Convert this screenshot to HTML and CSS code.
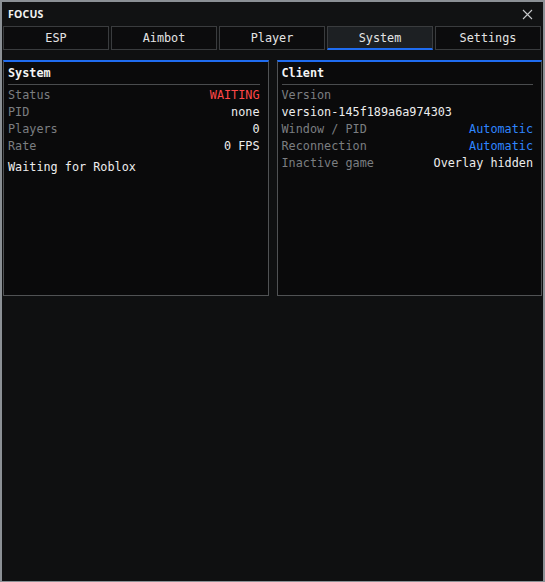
FILE: index.html
```html
<!DOCTYPE html>
<html lang="en">
<head>
  <meta charset="UTF-8">
  <meta name="viewport" content="width=device-width, initial-scale=1.0">
  <title>FOCUS</title>
  <link rel="stylesheet" href="styles.css">
</head>
<body>

  <div class="window">
    <!-- Title bar -->
    <div class="titlebar">
      <span class="title">FOCUS</span>
      <svg class="close" width="11" height="11" viewBox="0 0 11 11">
        <path d="M1 1 L10 10 M10 1 L1 10" stroke="#c8cacc" stroke-width="1.1" fill="none"/>
      </svg>
    </div>

    <!-- Tabs -->
    <div class="tabs">
      <div class="tab">ESP</div>
      <div class="tab">Aimbot</div>
      <div class="tab">Player</div>
      <div class="tab active">System</div>
      <div class="tab">Settings</div>
    </div>

    <div class="panels">
      <div class="panel">
        <div class="panel-head">System</div>
        <div class="row"><span class="label">Status</span><span class="value red">WAITING</span></div>
        <div class="row"><span class="label">PID</span><span class="value">none</span></div>
        <div class="row"><span class="label">Players</span><span class="value">0</span></div>
        <div class="row"><span class="label">Rate</span><span class="value">0 FPS</span></div>
        <div class="note">Waiting for Roblox</div>
      </div>

      <div class="panel">
        <div class="panel-head">Client</div>
        <div class="row"><span class="label">Version</span></div>
        <div class="row"><span class="value">version-145f189a6a974303</span></div>
        <div class="row"><span class="label">Window / PID</span><span class="value blue">Automatic</span></div>
        <div class="row"><span class="label">Reconnection</span><span class="value blue">Automatic</span></div>
        <div class="row"><span class="label">Inactive game</span><span class="value">Overlay hidden</span></div>
      </div>
    </div>
  </div>

</body>
</html>
```

FILE: styles.css
```css
body {
  margin: 0;
  background: #0f1011;
  font-family: "DejaVu Sans Mono", "Liberation Mono", monospace;
  font-size: 11.8px;
  color: #e8e8e8;
}
.window {
  width: 545px;
  height: 582px;
  box-sizing: border-box;
  border: 2px solid #8b9095;
  border-bottom-width: 1px;
  background: #0f1011;
  display: flex;
  flex-direction: column;
}
.titlebar {
  height: 24px;
  background: #111213;
  display: flex;
  align-items: center;
  justify-content: space-between;
  padding: 0 10px 0 6px;
}
.title {
  font-family: "Noto Sans", "Open Sans", sans-serif;
  font-weight: bold;
  font-size: 10.5px;
  color: #f2f2f2;
  letter-spacing: 0.2px;
}
.close {
  display: block;
}
.tabs {
  display: flex;
  gap: 2px;
  padding: 0 2px 0 1px;
}
.tab {
  flex: 1;
  height: 24px;
  box-sizing: border-box;
  border: 1px solid #3a3c3e;
  background: #0c0c0d;
  display: flex;
  align-items: center;
  justify-content: center;
  color: #e4e4e4;
}
.tab.active {
  background: #1d2023;
  border-bottom: 2px solid #1f6cf0;
}
.panels {
  display: flex;
  gap: 8px;
  margin-top: 10px;
  padding: 0 1px 0 1px;
}
.panel {
  flex: 1;
  height: 236px;
  box-sizing: border-box;
  background: #0a0a0b;
  border: 1px solid #505254;
  border-top: 2px solid #1f6cf0;
  padding: 3px 8px 0 4px;
}
.panel-head {
  font-weight: bold;
  color: #f4f4f4;
  line-height: 16px;
  padding-bottom: 3px;
  border-bottom: 1px solid #4a4c4e;
  margin-bottom: 2px;
}
.row {
  display: flex;
  justify-content: space-between;
  line-height: 17px;
}
.label {
  color: #7b7e81;
}
.value {
  color: #ededed;
}
.red {
  color: #ff4747;
}
.blue {
  color: #2f86ff;
}
.note {
  margin-top: 4px;
  line-height: 17px;
  color: #ededed;
}
```
